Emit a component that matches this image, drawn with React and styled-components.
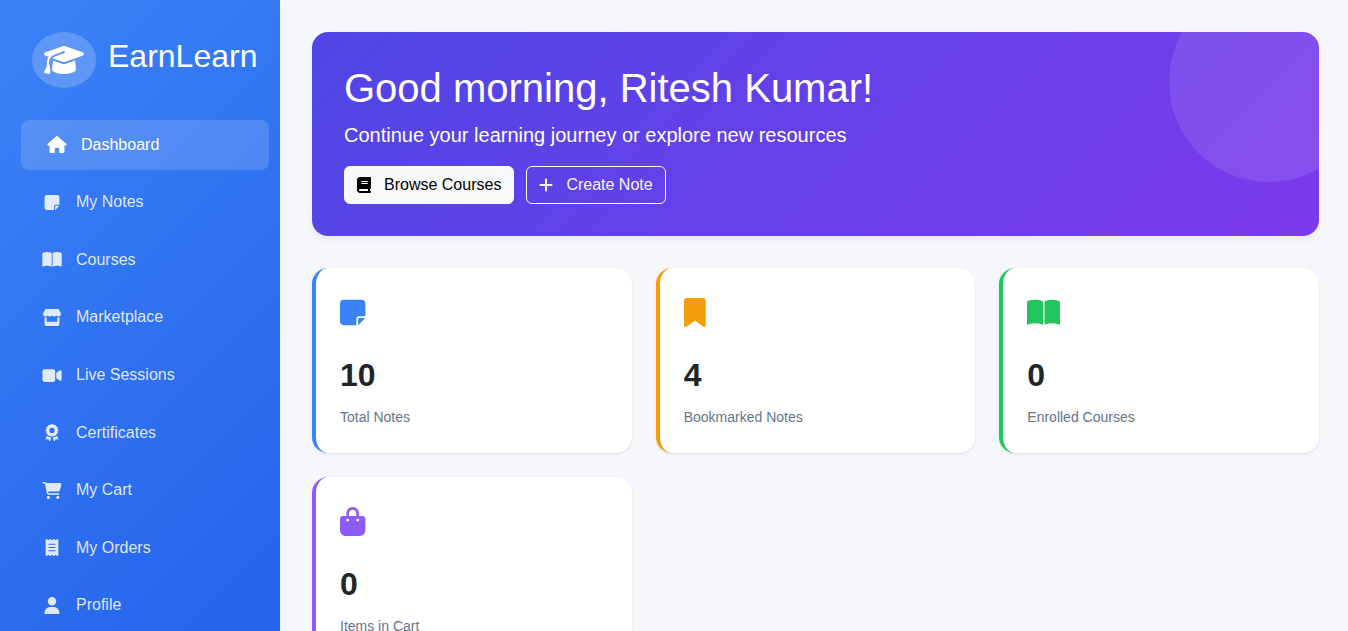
import React from "react";
import styled, { createGlobalStyle } from "styled-components";
import {
  FaAward,
  FaBagShopping,
  FaBook,
  FaBookmark,
  FaCartShopping,
  FaGraduationCap,
  FaHouse,
  FaNoteSticky,
  FaPlus,
  FaReceipt,
  FaStore,
  FaUser,
  FaVideo,
} from "react-icons/fa6";

const GlobalStyle = createGlobalStyle`
  *, *::before, *::after {
    box-sizing: border-box;
  }
  body {
    margin: 0;
    background: #f5f7fb;
    color: #212529;
    font-family: "Liberation Sans", Arial, sans-serif;
    font-size: 16px;
    line-height: 24px;
  }
`;

const Layout = styled.div`
  display: flex;
  align-items: flex-start;
`;

const Sidebar = styled.aside`
  position: sticky;
  top: 0;
  flex: 0 0 280px;
  min-width: 0;
  display: flex;
  flex-direction: column;
  gap: 32px;
  height: 100vh;
  padding: 32px 16px 1px;
  background: linear-gradient(135deg, #3b82f6, #2563eb);
  box-shadow: 0 4px 12px rgba(0, 0, 0, 0.05);
  color: #fff;
`;

const Brand = styled.div`
  display: flex;
  align-items: center;
  gap: 12px;
  padding-left: 16px;
`;

const BrandMark = styled.span`
  display: flex;
  padding: 12px;
  border-radius: 50%;
  background: rgba(255, 255, 255, 0.2);

  svg {
    width: 40px;
    height: 32px;
  }
`;

const BrandName = styled.h2`
  margin: 0 0 8px;
  font-size: 32px;
  font-weight: 400;
  line-height: 38px;
`;

const Nav = styled.nav`
  flex: 1;
  display: flex;
  flex-direction: column;
  gap: 8px;
`;

const NavLink = styled.a`
  flex: 1 0 auto;
  display: flex;
  align-items: center;
  gap: 12px;
  min-height: 40px;
  padding: 0 24px;
  border-radius: 8px;
  background: ${(p) => (p.$active ? "rgba(255, 255, 255, 0.15)" : "transparent")};
  color: ${(p) => (p.$active ? "#fff" : "rgba(255, 255, 255, 0.85)")};
  text-decoration: none;
  transform: ${(p) => (p.$active ? "translateX(5px)" : "none")};
`;

const NavIcon = styled.span`
  display: flex;
  justify-content: center;
  width: 24px;

  svg {
    width: 20px;
    height: 17px;
  }
`;

const Main = styled.main`
  flex: 1;
  min-width: 0;
  display: flex;
  flex-direction: column;
  gap: 32px;
  padding: 32px 29px 32px 32px;
`;

const Banner = styled.section`
  position: relative;
  overflow: hidden;
  padding: 32px;
  border-radius: 16px;
  background: linear-gradient(135deg, #4f46e5, #7c3aed);
  box-shadow: 0 4px 6px rgba(0, 0, 0, 0.05);
  color: #fff;

  &::before {
    content: "";
    position: absolute;
    top: -50px;
    right: -50px;
    width: 200px;
    height: 200px;
    border-radius: 50%;
    background: rgba(255, 255, 255, 0.1);
  }
`;

const Greeting = styled.h1`
  margin: 0 0 8px;
  font-size: 40px;
  font-weight: 400;
  line-height: 48px;
`;

const Lead = styled.p`
  margin: 0 0 16px;
  font-size: 20px;
  line-height: 30px;
`;

const Actions = styled.div`
  display: flex;
  flex-wrap: wrap;
  gap: 12px;
`;

const Button = styled.button`
  display: flex;
  align-items: center;
  gap: 13px;
  padding: 6px 12px;
  border: 1px solid #f8f9fa;
  border-radius: 6px;
  background: ${(p) => (p.$outline ? "transparent" : "#f8f9fa")};
  color: ${(p) => (p.$outline ? "#f8f9fa" : "#000")};
  font: inherit;
  cursor: pointer;

  svg {
    width: 14px;
    height: 16px;
  }
`;

const Stats = styled.section`
  display: grid;
  grid-template-columns: repeat(auto-fill, minmax(260px, 1fr));
  gap: 24px;
`;

const Card = styled.article`
  padding: 24px;
  border-left: 4px solid ${(p) => p.$accent};
  border-radius: 16px;
  background: #fff;
  box-shadow: 0 1px 3px rgba(0, 0, 0, 0.1);
`;

const CardIcon = styled.div`
  display: flex;
  align-items: center;
  height: 40px;
  margin-bottom: 24px;
  color: ${(p) => p.$accent};

  svg {
    width: 33px;
    height: 29px;
  }
`;

const CardValue = styled.h3`
  margin: 0 0 12px;
  font-size: 32px;
  font-weight: 700;
  line-height: 38px;
`;

const CardLabel = styled.p`
  margin: 0;
  color: #64748b;
  font-size: 14px;
  line-height: 23px;
`;

function OpenBook(props) {
  return (
    <svg viewBox="0 0 33 29" fill="currentColor" aria-hidden="true" {...props}>
      <path d="M0 4Q0 3.2.8 2.9Q8 .4 15.3 2.9Q16 3.2 16 4V26.8Q8 24 .8 26.7Q0 27 0 26.2Z" />
      <path d="M33 4Q33 3.2 32.2 2.9Q25 .4 18.2 2.9Q17.5 3.2 17.5 4V26.8Q25 24 32.2 26.7Q33 27 33 26.2Z" />
    </svg>
  );
}

const navItems = [
  { label: "Dashboard", icon: FaHouse, active: true },
  { label: "My Notes", icon: FaNoteSticky },
  { label: "Courses", icon: OpenBook },
  { label: "Marketplace", icon: FaStore },
  { label: "Live Sessions", icon: FaVideo },
  { label: "Certificates", icon: FaAward },
  { label: "My Cart", icon: FaCartShopping },
  { label: "My Orders", icon: FaReceipt },
  { label: "Profile", icon: FaUser },
];

const stats = [
  { value: 10, label: "Total Notes", icon: FaNoteSticky, accent: "#3b82f6" },
  { value: 4, label: "Bookmarked Notes", icon: FaBookmark, accent: "#f59e0b" },
  { value: 0, label: "Enrolled Courses", icon: OpenBook, accent: "#22c55e" },
  { value: 0, label: "Items in Cart", icon: FaBagShopping, accent: "#8b5cf6" },
];

export default function App() {
  return (
    <Layout>
      <GlobalStyle />
      <Sidebar>
        <Brand>
          <BrandMark>
            <FaGraduationCap />
          </BrandMark>
          <BrandName>EarnLearn</BrandName>
        </Brand>
        <Nav>
          {navItems.map(({ label, icon: Icon, active }) => (
            <NavLink key={label} href="#" $active={active} aria-current={active ? "page" : undefined}>
              <NavIcon>
                <Icon />
              </NavIcon>
              {label}
            </NavLink>
          ))}
        </Nav>
      </Sidebar>
      <Main>
        <Banner>
          <Greeting>Good morning, Ritesh Kumar!</Greeting>
          <Lead>Continue your learning journey or explore new resources</Lead>
          <Actions>
            <Button type="button">
              <FaBook />
              Browse Courses
            </Button>
            <Button type="button" $outline>
              <FaPlus />
              Create Note
            </Button>
          </Actions>
        </Banner>
        <Stats>
          {stats.map(({ value, label, icon: Icon, accent }) => (
            <Card key={label} $accent={accent}>
              <CardIcon $accent={accent}>
                <Icon preserveAspectRatio="xMinYMid meet" />
              </CardIcon>
              <CardValue>{value}</CardValue>
              <CardLabel>{label}</CardLabel>
            </Card>
          ))}
        </Stats>
      </Main>
    </Layout>
  );
}
